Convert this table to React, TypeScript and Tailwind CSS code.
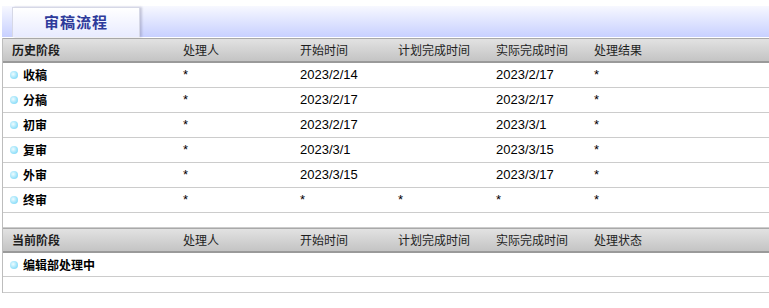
import type { FC } from "react";

const cols = "grid grid-cols-[180px_117px_98px_98px_98px_1fr]";

type Row = { stage: string; who: string; start: string; plan: string; done: string; result: string };

const history: Row[] = [
  { stage: "收稿", who: "*", start: "2023/2/14", plan: "", done: "2023/2/17", result: "*" },
  { stage: "分稿", who: "*", start: "2023/2/17", plan: "", done: "2023/2/17", result: "*" },
  { stage: "初审", who: "*", start: "2023/2/17", plan: "", done: "2023/3/1", result: "*" },
  { stage: "复审", who: "*", start: "2023/3/1", plan: "", done: "2023/3/15", result: "*" },
  { stage: "外审", who: "*", start: "2023/3/15", plan: "", done: "2023/3/17", result: "*" },
  { stage: "终审", who: "*", start: "*", plan: "*", done: "*", result: "*" },
];

const Dot: FC = () => (
  <span className="inline-block w-[8px] h-[8px] rounded-full bg-[radial-gradient(circle_at_40%_40%,#f0fcff_0%,#a6e6fb_50%,#6cd0f4_100%)]" />
);

const Head: FC<{ first: string; last: string }> = ({ first, last }) => (
  <div className={`${cols} h-[25px] items-center border-t border-b-2 border-t-[#a9a9a9] border-b-[#9a9a9a] bg-gradient-to-b from-[#e2e2e2] to-[#c4c4c4] text-[12px] text-[#1e1e1e]`}>
    <div className="pl-[9px] font-bold">{first}</div>
    <div>处理人</div>
    <div>开始时间</div>
    <div>计划完成时间</div>
    <div>实际完成时间</div>
    <div>{last}</div>
  </div>
);

const date = "font-['Liberation_Sans','Noto_Sans_CJK_SC',sans-serif] text-[13px]";

function App() {
  return (
    <div className="w-[769px] h-[308px] bg-white pt-[6px] font-['Noto_Sans_CJK_SC','Liberation_Sans',sans-serif] text-black">
      <div className="ml-[2px] h-[31px] flex items-end pl-[10px] bg-gradient-to-b from-[#f7f8ff] to-[#c8d0ff]">
        <div className="w-[128px] h-[30px] flex items-center justify-center border border-b-0 border-[#d6d8e6] bg-gradient-to-b from-white to-[#e8ebff] shadow-[2px_0_2px_rgba(120,120,150,0.35)] text-[15px] font-bold text-[#2e3b9b] tracking-[1px]">
          审稿流程
        </div>
      </div>
      <div className="h-px bg-white" />
      <div className="ml-[2px] border-l border-[#bdbdbd]">
        <Head first="历史阶段" last="处理结果" />
        {history.map((r) => (
          <div key={r.stage} className={`${cols} h-[25px] items-center border-b border-[#cccccc] text-[12px]`}>
            <div className="pl-[7px] flex items-center gap-[5px] font-bold">
              <Dot />
              {r.stage}
            </div>
            <div className={date}>{r.who}</div>
            <div className={date}>{r.start}</div>
            <div className={date}>{r.plan}</div>
            <div className={date}>{r.done}</div>
            <div className={date}>{r.result}</div>
          </div>
        ))}
        <div className="h-[15px] border-b border-[#cccccc]" />
        <Head first="当前阶段" last="处理状态" />
        <div className={`${cols} h-[24px] items-center border-b border-[#cccccc] text-[12px]`}>
          <div className="pl-[7px] flex items-center gap-[5px] font-bold whitespace-nowrap">
            <Dot />
            编辑部处理中
          </div>
        </div>
        <div className="h-[16px] border-b border-[#cccccc]" />
      </div>
    </div>
  );
}

export default App;
